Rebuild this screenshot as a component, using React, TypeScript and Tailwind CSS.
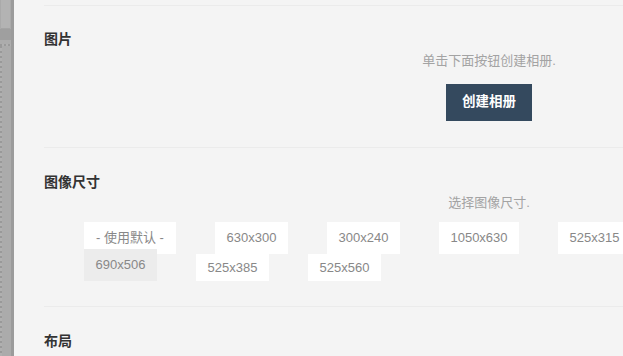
import React from "react";

const font = { fontFamily: '"Liberation Sans", "Noto Sans CJK SC", sans-serif' };

function Tile({ label, selected, tall, className = "" }: { label: string; selected?: boolean; tall?: boolean; className?: string }) {
  return (
    <div
      className={
        "flex shrink-0 items-center justify-center text-[13px] text-[#888] " +
        (selected ? "bg-[#ececec] " : "bg-white ") +
        (tall ? "h-[32px] " : "h-[27px] ") +
        className
      }
    >
      <span className="whitespace-nowrap">{label}</span>
    </div>
  );
}

export default function App() {
  return (
    <div className="flex h-[356px] w-[623px] overflow-hidden bg-[#f4f4f4]" style={font}>
      {/* left strip */}
      <div className="flex h-full w-[14px] shrink-0">
        <div className="flex h-full w-[11px] flex-col bg-[#aaaaaa]">
          <div className="ml-[1px] h-[29px] w-[9px] border-b border-[#a4a4a4] bg-[#b3b3b3]" />
          <div className="h-[11px] w-full bg-[#9f9f9f]" />
          <div className="h-[4px] w-full bg-[#acacac]" />
          <div className="h-[2px] w-full bg-[repeating-linear-gradient(90deg,#999_0px,#999_2px,#b0b0b0_2px,#b0b0b0_4px)]" />
          <div className="flex flex-1">
            <div className="h-full w-[2px] bg-[repeating-linear-gradient(180deg,#999_0px,#999_2px,#b0b0b0_2px,#b0b0b0_5px)]" />
            <div className="h-full flex-1 bg-[#ababab]" />
          </div>
        </div>
        <div className="h-full w-[3px] bg-[#9b9b9b]" />
      </div>

      {/* main */}
      <div className="flex-1 pl-[30px] pt-[5px]">
        {/* section 1 */}
        <div className="border-t border-[#ebebeb] pb-[26px]">
          <div className="mt-[23px] text-[14px] font-bold leading-[20px] text-[#333]">图片</div>
          <div className="flex w-[890px] flex-col items-center">
            <div className="mt-[2px] text-[13px] leading-[20px] text-[#a3a3a3]">单击下面按钮创建相册.</div>
            <button className="mt-[13px] flex h-[37px] w-[86px] items-center justify-center bg-[#34495e] text-[13.5px] font-bold text-white">
              创建相册
            </button>
          </div>
        </div>

        {/* section 2 */}
        <div className="border-t border-[#ebebeb] pb-[25px]">
          <div className="mt-[24px] text-[14px] font-bold leading-[20px] text-[#333]">图像尺寸</div>
          <div className="flex w-[890px] flex-col items-center">
            <div className="mt-[1px] text-[13px] leading-[20px] text-[#a3a3a3]">选择图像尺寸.</div>
          </div>
          <div className="ml-[40px] mt-[9px] flex flex-col">
            <div className="flex gap-[39px]">
              <Tile label="- 使用默认 -" tall className="w-[92px]" />
              <Tile label="630x300" tall className="w-[73px]" />
              <Tile label="300x240" tall className="w-[73px]" />
              <Tile label="1050x630" tall className="w-[80px]" />
              <Tile label="525x315" tall className="w-[73px]" />
            </div>
            <div className="flex items-start gap-[39px]">
              <Tile label="690x506" selected tall className="relative -mt-[5px] w-[73px]" />
              <Tile label="525x385" className="w-[73px]" />
              <Tile label="525x560" className="w-[73px]" />
            </div>
          </div>
        </div>

        {/* section 3 */}
        <div className="border-t border-[#ebebeb]">
          <div className="mt-[24px] text-[14px] font-bold leading-[20px] text-[#333]">布局</div>
        </div>
      </div>
    </div>
  );
}
